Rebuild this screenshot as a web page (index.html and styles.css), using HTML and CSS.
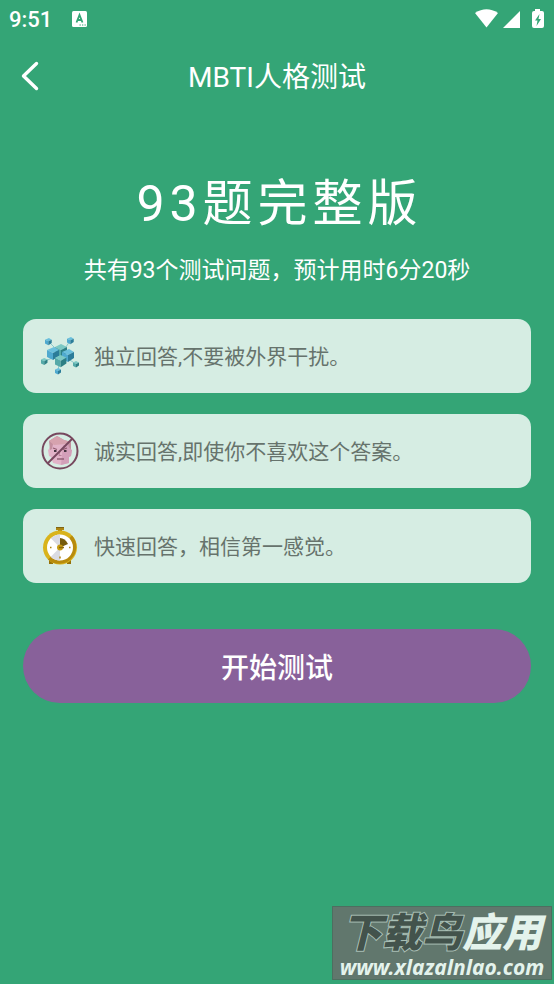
FILE: index.html
```html
<!DOCTYPE html>
<html lang="zh-CN">
<head>
<meta charset="utf-8">
<meta name="viewport" content="width=device-width, initial-scale=1">
<title>MBTI人格测试</title>
<link rel="stylesheet" href="styles.css">
</head>
<body>
<div class="status">
  <span class="time">9:51</span>
  <svg class="status-app" viewBox="0 0 15 16" aria-hidden="true">
    <rect width="15" height="16" rx="1.5" fill="#fff"/>
    <path d="M4.500 11.500 7.500 4l3 7.500M5.500 9h4" fill="none" stroke="#34a576" stroke-width="1.800"/>
    <path d="M7.500 14h1.300M10 14h1.300M12.500 14h1.300" stroke="#34a576" stroke-width="1.200"/>
  </svg>
  <svg class="status-icons" viewBox="0 0 70 20" aria-hidden="true">
    <path d="M0 4Q11.500-3.500 23 4L11.500 18.500Z" fill="#fff"/>
    <path d="M28 19 45 2V19Z" fill="#fff"/>
    <path d="M60 0h5v2h2q2 0 2 2v13q0 2-2 2h-8q-2 0-2-2V4q0-2 2-2h1Z" fill="#fff"/>
    <path d="M64.500 5 60 11.500h2.500L61.500 17l4.500-7h-2.500Z" fill="#34a576"/>
  </svg>
</div>
<header class="bar">
  <button class="back" type="button" aria-label="返回">
    <svg viewBox="0 0 18 30" aria-hidden="true"><path d="M15.500 2.500 2.500 15l13 12.500" fill="none" stroke="#fff" stroke-width="3.400" stroke-linecap="round" stroke-linejoin="round"/></svg>
  </button>
  <h1 class="title">MBTI人格测试</h1>
</header>
<main class="content">
  <h2 class="headline">93题完整版</h2>
  <p class="summary">共有93个测试问题，预计用时6分20秒</p>
  <ul class="tips">
    <li class="tip">
      <svg class="tip-icon" viewBox="0 0 38 38" aria-hidden="true">
        <defs>
          <g id="blue-cube"><path d="M0 3 7 0l5 3-6 3Z" fill="#6abfdc"/><path d="M0 3l6 3v7L0 10Z" fill="#4fa9cf"/><path d="M12 3 6 6v7l6-4Z" fill="#2b7c99"/></g>
          <g id="teal-cube"><path d="M0 3 6 0l6 3-6 3Z" fill="#7cc9c4"/><path d="M0 3l6 3v7L0 10Z" fill="#55a9a8"/><path d="M12 3 6 6v7l6-4Z" fill="#2d7f84"/></g>
        </defs>
        <path d="M8 5 19 16M29 4 20 17M4 24 19 18M17 34 19 20M35 27 21 18" stroke="#8bc9cb" stroke-width="1"/>
        <use href="#teal-cube" transform="translate(14 7)"/>
        <use href="#blue-cube" transform="translate(6 10)"/>
        <use href="#blue-cube" transform="translate(21 12)"/>
        <use href="#teal-cube" transform="translate(14 18) scale(.95)"/>
        <use href="#blue-cube" transform="translate(4 1) scale(.56)"/>
        <use href="#blue-cube" transform="translate(26 0) scale(.56)"/>
        <use href="#teal-cube" transform="translate(0 21) scale(.54)"/>
        <use href="#blue-cube" transform="translate(14 31) scale(.5)"/>
        <use href="#teal-cube" transform="translate(32 24) scale(.5)"/>
      </svg>
      <span>独立回答,不要被外界干扰。</span>
    </li>
    <li class="tip">
      <svg class="tip-icon" viewBox="0 0 38 38" aria-hidden="true">
        <path d="M10 12h19v5l2 1-1 6-2 1v6l-8 2-8-2-2-6-2-1-1-6 1-1Z" fill="#e2b3c8"/>
        <path d="M22 13h7v4l2 1-1 6-2 1v6l-8 2Z" fill="#d39fb9"/>
        <path d="M9 18 8 9l8-5 7 4 7 2v8l-2-3-1-3H12l-1 5Z" fill="#c28e9e"/>
        <path d="M8 9l8-5 7 4 7 2-5 2-12 1Z" fill="#d6a2ae"/>
        <path d="m12 16 4 1.500M22 17.500l4-1.500" stroke="#90596e" stroke-width="1.200"/>
        <path d="M13 19h2.500M23 19h2.500" stroke="#453440" stroke-width="2"/>
        <path d="m19 19-1 4.500h2.500" fill="none" stroke="#b98099" stroke-width="1"/>
        <path d="M16 27h7" stroke="#7d4d62" stroke-width="1.200"/>
        <circle cx="19" cy="19" r="17.500" fill="none" stroke="#77485e" stroke-width="2"/>
        <path d="M6.500 31.500 31.500 6.500" stroke="#77485e" stroke-width="2"/>
      </svg>
      <span>诚实回答,即使你不喜欢这个答案。</span>
    </li>
    <li class="tip">
      <svg class="tip-icon" viewBox="0 0 38 38" aria-hidden="true">
        <path d="M15 0h8v3h-2v3h-4V3h-2Z" fill="#ae8611"/><path d="M15 0h8v1h-8Z" fill="#806514"/>
        <path d="M8 33h4v4H8ZM26 33h4v4h-4Z" fill="#94710a"/>
        <circle cx="19" cy="20.500" r="17" fill="#d9b31b"/>
        <path d="M31 8.500A17 17 0 0 1 7 32.500Z" fill="#b88b0d"/>
        <circle cx="19" cy="20.500" r="13" fill="#fff"/>
        <path d="M19 7.500A13 13 0 0 0 9.800 11.300L19 20.500ZM9.800 29.700A13 13 0 0 0 19 33.500V20.500Z" fill="#dadbe3"/>
        <path d="M19 20.500V11q5 0 8 6Z" fill="#765b0b"/>
        <circle cx="19" cy="20.500" r="3" fill="#c59a12"/><path d="M18 20.500h5" stroke="#8a680a" stroke-width="1.500"/>
        <path d="M9 20.500h1.500M28 20.500h1.500M19 29.500v2" stroke="#ad8415" stroke-width="1.500"/>
      </svg>
      <span>快速回答，相信第一感觉。</span>
    </li>
  </ul>
  <button class="start" type="button">开始测试</button>
</main>
<aside class="mark">
  <div class="mark-name"><span class="mark-dark">下载鸟</span><span class="mark-light">应用</span></div>
  <div class="mark-url">www.xlazalnlao.com</div>
</aside>
</body>
</html>
```
FILE: styles.css
```css
* { box-sizing: border-box; }
body {
  margin: 0;
  min-height: 100vh;
  display: flex;
  flex-direction: column;
  background: #34a576;
  color: #fff;
  font-family: Roboto, "Noto Sans CJK SC", sans-serif;
}
h1, h2, p, ul { margin: 0; padding: 0; font-weight: 400; }
button { border: 0; padding: 0; color: inherit; font-family: inherit; cursor: pointer; }
svg { display: block; flex: none; }
.status {
  display: flex;
  align-items: center;
  height: 38px;
  padding: 0 9px;
}
.time { font-size: 22px; font-weight: 500; }
.status-app { width: 15px; height: 16px; margin-left: 20px; }
.status-icons { width: 70px; height: 20px; margin-left: auto; }
.bar {
  display: grid;
  grid-template-columns: 40px 1fr 40px;
  align-items: center;
  height: 76px;
  padding: 0 20px;
}
.back { background: none; justify-self: start; }
.back svg { width: 20px; height: 30px; }
.title { padding-top: 3px; font-size: 28px; line-height: 40px; text-align: center; }
.content { padding: 55px 23px 24px; text-align: center; }
.headline { padding-left: 5px; font-size: 50px; line-height: 70px; letter-spacing: 5px; }
.summary { margin-top: 15px; font-size: 23px; line-height: 34px; }
.tips { display: grid; gap: 21px; margin-top: 31px; list-style: none; }
.tip {
  display: flex;
  align-items: center;
  gap: 15px;
  min-height: 74px;
  padding: 0 18px;
  border-radius: 13px;
  background: #d6ede3;
  color: #66736c;
  font-size: 21px;
  line-height: 32px;
  text-align: left;
}
.tip span { padding-top: 2px; }
.tip-icon { width: 38px; height: 38px; }
.start {
  width: 100%;
  height: 74px;
  margin-top: 46px;
  border-radius: 37px;
  background: #88619a;
  font-size: 28px;
  font-weight: 500;
}
.mark {
  align-self: flex-end;
  width: 220px;
  margin: auto 2px 4px 0;
  padding: 6px 0 0;
  border: 1px solid #4e6e60;
  background: #61776d;
  text-align: center;
  white-space: nowrap;
}
.mark-name {
  font-size: 40px;
  font-style: italic;
  font-weight: 900;
  line-height: 42px;
  paint-order: stroke fill;
}
.mark-dark { color: #43534c; -webkit-text-stroke: 2px #a9bfb5; }
.mark-light { color: #e4f3ec; }
.mark-url {
  color: #e4f3ec;
  font-family: "Noto Sans", sans-serif;
  font-size: 21px;
  font-style: italic;
  font-weight: 700;
  line-height: 24px;
}
```
